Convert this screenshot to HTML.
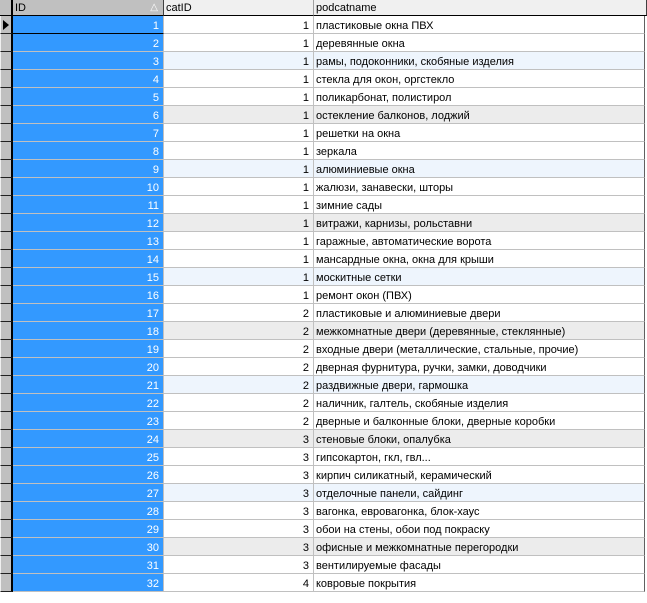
<!DOCTYPE html>
<html><head><meta charset="utf-8"><style>
body{margin:0;width:647px;height:603px;background:#fff;overflow:hidden;font:11px "Liberation Sans","DejaVu Sans",sans-serif;color:#000}
.r{position:absolute;left:0;width:647px;height:18px}
.c{position:absolute;top:0;height:16px;padding-top:1px;border-bottom:1px solid #c0c0c0;border-right:1px solid #c0c0c0;line-height:18px;white-space:nowrap;overflow:hidden}
.ind{left:0;width:10px;background:#c0c0c0;border-left:1px solid #f0f0f0;border-right:2px solid #000;border-bottom:1px solid #202020}
.id{left:13px;width:146px;background:#3399ff;color:#fff;text-align:right;padding-right:4px}
.cat{left:164px;width:145px;text-align:right;padding-right:4px}
.nm{left:314px;width:328px;padding-left:2px;border-right:1px solid #606060}
.b .cat,.b .nm{background:#eef5fd}
.g .cat,.g .nm{background:#ececec}
.h{position:absolute;top:0;height:15px;line-height:16px;border-bottom:1px solid #000;border-right:1px solid #404040}
</style></head><body>
<div class="h" style="left:0;width:11px;background:#c0c0c0;border-right:2px solid #000"></div>
<div class="h" style="left:13px;width:148px;background:#c0c0c0;padding-left:2px">ID<span style="position:absolute;right:5px;top:0;color:#fff;font-size:10px">△</span></div>
<div class="h" style="left:164px;width:147px;background:#f0f0f0;padding-left:2px;border-right:1px solid #a0a0a0">catID</div>
<div class="h" style="left:314px;width:330px;background:#f0f0f0;padding-left:2px;border-right:2px solid #404040">podcatname</div>
<div id="rows"></div>
<script>
var d=[[1,"пластиковые окна ПВХ"],[1,"деревянные окна"],[1,"рамы, подоконники, скобяные изделия"],[1,"стекла для окон, оргстекло"],[1,"поликарбонат, полистирол"],[1,"остекление балконов, лоджий"],[1,"решетки на окна"],[1,"зеркала"],[1,"алюминиевые окна"],[1,"жалюзи, занавески, шторы"],[1,"зимние сады"],[1,"витражи, карнизы, рольставни"],[1,"гаражные, автоматические ворота"],[1,"мансардные окна, окна для крыши"],[1,"москитные сетки"],[1,"ремонт окон (ПВХ)"],[2,"пластиковые и алюминиевые двери"],[2,"межкомнатные двери (деревянные, стеклянные)"],[2,"входные двери (металлические, стальные, прочие)"],[2,"дверная фурнитура, ручки, замки, доводчики"],[2,"раздвижные двери, гармошка"],[2,"наличник, галтель, скобяные изделия"],[2,"дверные и балконные блоки, дверные коробки"],[3,"стеновые блоки, опалубка"],[3,"гипсокартон, гкл, гвл..."],[3,"кирпич силикатный, керамический"],[3,"отделочные панели, сайдинг"],[3,"вагонка, евровагонка, блок-хаус"],[3,"обои на стены, обои под покраску"],[3,"офисные и межкомнатные перегородки"],[3,"вентилируемые фасады"],[4,"ковровые покрытия"]];
var h="";
d.forEach(function(x,i){var n=i+1;var cl=n%6==3?"b":(n%6==0?"g":"");
h+='<div class="r '+cl+'" style="top:'+(16+i*18)+'px"><div class="c ind">'+(n==1?'<span style="position:absolute;left:2px;top:4px;border-left:6px solid #000;border-top:5px solid transparent;border-bottom:5px solid transparent;width:0;height:0"></span>':'')+'</div><div class="c id"'+(n==1?' style="border-bottom:1px solid #000"':'')+'>'+n+'</div><div class="c cat">'+x[0]+'</div><div class="c nm">'+x[1]+'</div></div>';});
document.getElementById("rows").innerHTML=h;
</script>
</body></html>
